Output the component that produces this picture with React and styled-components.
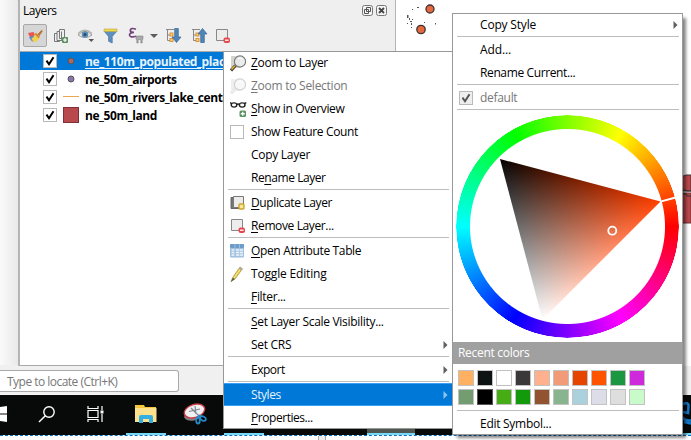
import React from "react";
import styled, { createGlobalStyle, css } from "styled-components";

const Global = createGlobalStyle`
  html, body { margin: 0; padding: 0; background: #fff; overflow: hidden; }
  *, *::before, *::after { box-sizing: border-box; }
  svg { display: block; flex: none; }
`;

const Screen = styled.div`
  position: relative;
  width: 691px;
  height: 440px;
  overflow: hidden;
  display: flex;
  flex-direction: column;
  background: #fff;
  color: #000;
  font: 12px/18px "Open Sans", "Noto Sans", sans-serif;
`;

const Workspace = styled.div`
  display: flex;
  height: 366px;
  flex: none;
`;

const Gutter = styled.div`
  width: 18px;
  background: linear-gradient(90deg, #fafafa, #e9e9e9);
  border-bottom: 1px solid #f0f0f0;
`;

const Panel = styled.div`
  width: 378px;
  display: flex;
  flex-direction: column;
  background: #efefef;
  border-left: 2px solid #b4b4b4;
  border-right: 1px solid #b4b4b4;
`;

const PanelHeader = styled.div`
  height: 21px;
  display: flex;
  align-items: center;
  justify-content: space-between;
  padding: 0 8px 0 3px;
`;

const PanelTitle = styled.span`
  letter-spacing: -0.45px;
`;

const HeaderButtons = styled.div`
  display: flex;
  gap: 3px;
`;

const Toolbar = styled.div`
  height: 30px;
  display: flex;
  align-items: center;
  padding: 0 0 1px 3px;
`;

const ToolSlot = styled.div`
  width: ${(p) => p.$w}px;
  height: 23px;
  display: flex;
  align-items: center;
  justify-content: center;
  flex: none;
  ${(p) =>
    p.$pressed &&
    css`
      background: #d6d6d6;
      border: 1px solid #a8a8a8;
      border-radius: 2px;
    `}
`;

const LayerList = styled.div`
  flex: 1;
  background: #fff;
  border-top: 1px solid #aaa;
  border-bottom: 1px solid #a8a8a8;
`;

const LayerRow = styled.div`
  height: 18px;
  display: flex;
  align-items: center;
  padding-left: 23px;
  font-weight: 700;
  white-space: nowrap;
  letter-spacing: ${(p) => p.$ls}px;
  ${(p) =>
    p.$selected &&
    css`
      background: #0078d7;
      color: #e8f3fc;
      text-decoration: underline;
      text-underline-offset: 2px;
    `}
`;

const Symbol = styled.div`
  width: 28px;
  display: flex;
  align-items: center;
  justify-content: center;
  flex: none;
`;

const LayerName = styled.span`
  padding-top: 2px;
  line-height: 16px;
`;

const MapCanvas = styled.div`
  flex: 1;
  display: flex;
  align-items: flex-start;
  justify-content: space-between;
`;

const StatusBar = styled.div`
  height: 29px;
  flex: none;
  display: flex;
  align-items: center;
  background: #f0f0f0;
  border-bottom: 1px solid #f6f6f6;
`;

const Locator = styled.div`
  width: 179px;
  height: 22px;
  margin-top: 1px;
  border: 1px solid #a9a9a9;
  border-left: 0;
  border-radius: 0 3px 3px 0;
  background: #fff;
  color: #777;
  line-height: 21px;
  padding-left: 7px;
  letter-spacing: -0.52px;
`;

const Taskbar = styled.div`
  height: 41px;
  flex: none;
  display: flex;
  background: #080a09;
  background-clip: padding-box;
  border-bottom: 1px dashed #0a6fc2;
`;

const TaskSlot = styled.div`
  width: ${(p) => p.$w}px;
  display: flex;
  align-items: center;
  justify-content: ${(p) => p.$align || "center"};
  border-bottom: 2px solid ${(p) => (p.$open ? "#76d9f5" : "transparent")};
  ${(p) => p.$lit && "background: #505652;"}
`;

const Footer = styled.div`
  flex: 1;
  padding-left: 318px;
`;

const SplitHandle = styled.div`
  width: 8px;
  height: 5px;
  background: #eee;
  border: solid #aaa;
  border-width: 0 1px;
`;

const Menu = styled.div`
  position: absolute;
  left: ${(p) => p.$x}px;
  top: ${(p) => p.$y}px;
  width: ${(p) => p.$w}px;
  height: ${(p) => p.$h}px;
  background: #fff;
  padding: 0 1px;
  &::after {
    content: "";
    position: absolute;
    inset: 0;
    border: 1px solid #989898;
    pointer-events: none;
  }
  ${(p) => p.$shadow && "box-shadow: 4px 4px 3px -1px rgba(0,0,0,.48);"}
`;

const Item = styled.div`
  height: 23px;
  display: flex;
  align-items: center;
  white-space: nowrap;
  padding-right: 4px;
  color: ${(p) => (p.$disabled ? "#777" : "#000")};
  ${(p) =>
    p.$active &&
    css`
      background: #0078d7;
      color: #e6f2fc;
      box-shadow: inset 0 1px #3aa0f5, inset 0 -1px #3aa0f5;
    `}
`;

const ItemIcon = styled.span`
  width: 27px;
  height: 23px;
  padding: 1px 0 0 6px;
  display: flex;
  align-items: center;
  flex: none;
`;

const Label = styled.span`
  flex: 1;
  line-height: 18px;
  padding-top: 1px;
  letter-spacing: ${(p) => p.$ls ?? -0.33}px;
`;

const Key = styled.span`
  text-decoration: underline;
  text-underline-offset: 2px;
  text-decoration-thickness: 1px;
`;

const Separator = styled.div`
  height: 2px;
  margin: 0 3px 0 4px;
  border-top: 1px solid #bdbdbd;
`;

const CheckBox = styled.span`
  width: 14px;
  height: 14px;
  display: flex;
  align-items: center;
  justify-content: center;
  flex: none;
  border: 1px solid #b9b9b9;
  background: ${(p) => (p.$grey ? "#eee" : "#fff")};
`;

const WheelArea = styled.div`
  position: relative;
  height: 231px;
  padding: 4px 0 0 3px;
`;

const HueRing = styled.div`
  width: 223px;
  height: 223px;
  border-radius: 50%;
  background: conic-gradient(from 90deg, #f00, #f0f, #00f, #0ff, #0f0, #ff0, #f00);
  mask: radial-gradient(circle, transparent 97px, #000 98px, #000 111px, transparent 111.6px);
`;

const WheelOverlay = styled.svg`
  position: absolute;
  left: 3px;
  top: 4px;
`;

const TriangleFill = styled.g`
  isolation: isolate;
`;

const WhiteLayer = styled.rect`
  mix-blend-mode: plus-lighter;
`;

const SectionHeader = styled.div`
  height: 22px;
  margin-bottom: 6px;
  padding-left: 5px;
  line-height: 22px;
  background: #a0a0a0;
  color: #fff;
  letter-spacing: -0.3px;
`;

const Swatches = styled.div`
  display: grid;
  grid-template-columns: repeat(10, 16px);
  grid-auto-rows: 16px;
  gap: 3px;
  padding-left: 5px;
  margin-bottom: 5px;
`;

const Swatch = styled.div`
  border: 1px solid ${(p) => (p.$current ? "#555" : "#c2c2c2")};
  background: ${(p) => p.$color};
`;

const Tick = ({ color = "#000" }) => (
  <svg width="12" height="12" viewBox="0 0 12 12">
    <path d="M2.5 5.6 5 9.2 9.5 2.2" fill="none" stroke={color} strokeWidth="2" />
  </svg>
);

const Arrow = ({ color = "#606060" }) => (
  <svg width="5" height="8" viewBox="0 0 5 8">
    <path d="M0.5 0 4.5 4 0.5 8Z" fill={color} />
  </svg>
);

const Magnifier = ({ faded }) => (
  <svg width="17" height="17" viewBox="0 0 17 17" opacity={faded ? 0.35 : 1}>
    <rect x="1" y="1" width="9" height="12" rx="1" fill="#d2d2cf" />
    <path d="M1 15.5 5.5 10.5" stroke={faded ? "#bbb" : "#333"} strokeWidth="3" />
    <path d="M1.5 14.5 5 10.7" stroke={faded ? "#ccc" : "#eab32d"} strokeWidth="1.6" />
    <circle cx="10" cy="6.5" r="5.6" fill="#e9ebea" fillOpacity=".9" stroke="#777" strokeWidth="1.1" />
    <path d="M8 3.5q2.5-1.5 4.5 1" stroke="#fff" fill="none" />
  </svg>
);

const Glasses = () => (
  <svg width="17" height="17" viewBox="0 0 17 17">
    <g fill="none" stroke="#222" strokeWidth="1.4">
      <ellipse cx="4" cy="4" rx="2.8" ry="2.1" />
      <ellipse cx="12.2" cy="4" rx="2.8" ry="2.1" />
      <path d="M6.7 3.5q1.4-1 2.800 0M0 1.700l1.800.9M14.500 2.500l1.800-.8" />
    </g>
    <rect x="9.500" y="9.500" width="6.500" height="6.500" rx="1.500" fill="#5b9160" />
    <path d="M12.750 10.700v4M10.800 12.750h4" stroke="#fff" strokeWidth="1.300" />
  </svg>
);

const Duplicate = () => (
  <svg width="16" height="16" viewBox="0 0 16 16">
    <path d="M1 2.5h10v11H1z" fill="#777" stroke="#666" />
    <path d="M3.5 1.5h10v11h-10z" fill="#ecedea" stroke="#777" />
    <rect x="9" y="9" width="5" height="5" rx="1" fill="#f8e69a" stroke="#c9a52c" strokeWidth="1.4" />
  </svg>
);

const Remove = () => (
  <svg width="16" height="16" viewBox="0 0 16 16">
    <path d="M1.5 1.5h11v11h-11z" fill="#ededeb" stroke="#888" />
    <rect x="8.5" y="9.5" width="6.5" height="5.5" rx="2" fill="#e5484d" />
    <path d="M10 12.2h3.6" stroke="#fff" strokeWidth="1.3" />
  </svg>
);

const Table = () => (
  <svg width="15" height="14" viewBox="0 0 15 14">
    <rect width="14" height="13.5" rx="1" fill="#9fc0de" />
    <rect width="14" height="4" rx="1" fill="#6d9cc9" />
    <path d="M1.5 6h3M1.5 8.5h3M1.5 11h3M6 6h7M6 8.5h7M6 11h7" stroke="#eef5fb" strokeWidth="1.4" />
    <path d="M5 0v13.5M9.5 0v13.5" stroke="#a9c7e2" strokeWidth=".8" />
  </svg>
);

const Pencil = () => (
  <svg width="16" height="17" viewBox="0 0 16 17">
    <path d="M1 15.5 3 11 10 1l2.500 1.800L5 13Z" fill="#e5c748" stroke="#a4913c" strokeWidth=".7" />
    <path d="M4 12 11 2.200" stroke="#fff08c" />
    <path d="M10 1l2.500 1.800-1.200 1.600L8.800 2.700Z" fill="#aaa" />
    <path d="M.8 16 2.800 11.700l2 1.400Z" fill="#555" />
  </svg>
);

const Brush = () => (
  <svg width="17" height="16" viewBox="0 0 17 16">
    <path d="M1 5 6.500 4 9 9 3.500 10.500Z" fill="#e8564f" />
    <path d="M2 9.500 6 7.500 9.500 12.500 5 13.500Z" fill="#5c8fcd" />
    <path d="M4.500 10.500Q7.500 9 7.800 6l4.500 4.200Q10.500 14 6.500 14Z" fill="#f5d04b" />
    <path d="M7.500 6 9 4.700 13 9l-1.600 1.200Z" fill="#d4873b" />
    <path d="M10.500 6.200 14.500 2l1.300 1-3.400 5Z" fill="#b9712c" />
  </svg>
);

const AddGroup = () => (
  <svg width="16" height="16" viewBox="0 0 16 16">
    <g fill="#eee" stroke="#777">
      <path d="M1.5 5.5h5v8h-5z" />
      <path d="M4 3.5h5v9H4z" />
      <path d="M6.5 1.5h5v9h-5z" />
    </g>
    <path d="M8.5 3.5v8" stroke="#777" />
    <rect x="9" y="9" width="6" height="6" rx="1" fill="#5b9160" />
    <path d="M12 10v4M10 12h4" stroke="#fff" strokeWidth="1.2" />
  </svg>
);

const Eye = () => (
  <svg width="18" height="15" viewBox="0 0 18 15">
    <path d="M1 7Q8 0 15 7 8 12 1 7Z" fill="#f2f2f0" stroke="#9a9a96" />
    <path d="M1 5.5Q8-1 15 5.5" fill="none" stroke="#b4b4ae" strokeWidth="1.3" />
    <circle cx="8" cy="6.5" r="3.3" fill="#5b8fba" />
    <circle cx="8" cy="6.5" r="1.5" fill="#2c4b66" />
    <path d="M11.5 11h5.5l-2.7 3Z" fill="#555" />
  </svg>
);

const Funnel = () => (
  <svg width="15" height="16" viewBox="0 0 15 16">
    <path d="M1 3h13L9.2 8.5V15l-3.6-1.7V8.5Z" fill="#5d8fc0" stroke="#41709c" strokeWidth=".7" />
    <path d="M1 1h13v2.6H1z" fill="#f0db4e" stroke="#b6a443" strokeWidth=".6" />
  </svg>
);

const Expression = () => (
  <svg width="16" height="17" viewBox="0 0 16 17">
    <path d="M8 2.2Q2.5.4 2.3 3.4 2.3 5.4 6 5.4 1.3 5.6 1.5 8.2 2 11 8 9.3" fill="none" stroke="#73477b" strokeWidth="1.7" />
    <path d="M8 9h7v3l-.8 1v3h-1.400v-3.500h-2.600V16H8.800v-3L8 12Z" fill="#ababab" stroke="#777" strokeWidth=".5" />
  </svg>
);

const Tree = ({ up }) => (
  <svg width="17" height="15" viewBox="0 0 17 15">
    <path d="M1 1.500h8M2.500 2v10.500H5M2.500 7H5" fill="none" stroke="#888" />
    <rect x="5" y="5" width="3" height="3" fill="#f7d27a" stroke="#e0923a" />
    <rect x="5" y="10.500" width="3" height="3" fill="#f7d27a" stroke="#e0923a" />
    <path
      d={up ? "M11.500 .5 16 6H13.300v8.500H9.700V6H7Z" : "M11.500 14.500 16 9H13.300V.5H9.700V9H7Z"}
      fill="#4f86ba"
      stroke="#38658f"
      strokeWidth=".7"
    />
  </svg>
);

const CaretDown = () => (
  <svg width="8" height="4" viewBox="0 0 8 4">
    <path d="M0 0h8L4 4Z" fill="#5c5c5c" />
  </svg>
);

const DockButton = ({ close }) => (
  <svg width="11" height="11" viewBox="0 0 11 11">
    <rect x=".5" y=".5" width="10" height="10" rx="2" fill="#f4f4f4" stroke="#777" />
    {close ? (
      <path d="m3 3 5 5M8 3 3 8" stroke="#444" strokeWidth="1.8" />
    ) : (
      <path d="M4.500 2.500h4v4h-4zM2.500 4.500h4v4h-4z" fill="#f4f4f4" stroke="#555" />
    )}
  </svg>
);

const Dot = ({ color }) => (
  <svg width="8" height="8" viewBox="0 0 8 8">
    <circle cx="4" cy="4" r="3" fill={color} stroke="#555" />
  </svg>
);

const LineSymbol = () => (
  <svg width="16" height="2" viewBox="0 0 16 2">
    <path d="M0 .5h16" stroke="#e9a84f" />
  </svg>
);

const FillSymbol = () => (
  <svg width="16" height="16" viewBox="0 0 16 16">
    <rect x=".5" y=".5" width="15" height="15" fill="#b8494d" stroke="#803136" />
  </svg>
);

const Islands = () => (
  <svg width="40" height="40" viewBox="0 0 40 40">
    <g fill="#e5693f" stroke="#3c3230" strokeWidth="1.300">
      <circle cx="34" cy="9" r="4" />
      <circle cx="25" cy="29.500" r="4.200" />
    </g>
    <g fill="#555">
      <path d="M11 15h1.500v3H11zM13 18h1v2h-1zM14 21h2v1h-2zM16 19h1v1h-1zM11 23h1v1h-1zM15 23h1v2h-1zM16 9h1v1h-1zM21 7h2v1h-2zM39 23h1.500v1.500H39zM15 27h1v1h-1zM28 22h1v1h-1z" />
    </g>
  </svg>
);

const Coast = () => (
  <svg width="10" height="226" viewBox="0 0 10 226">
    <path d="M0 177 5 175h5v16H0Z" fill="#bc484d" stroke="#463234" />
    <path d="M0 193h10v30H0Z" fill="#bc484d" stroke="#703338" />
    <path d="M0 190h4l2 1h4M0 194h5l1 2h4" fill="none" stroke="#333" />
  </svg>
);

const StartLogo = () => (
  <svg width="7" height="16" viewBox="0 0 7 16">
    <path d="M0 1 7 0v7.500H0zM0 8.500h7V16L0 15z" fill="#fff" />
  </svg>
);

const SearchGlass = () => (
  <svg width="18" height="17" viewBox="0 0 18 17">
    <circle cx="11" cy="6" r="5.200" fill="none" stroke="#fff" strokeWidth="1.400" />
    <path d="M7.300 9.700 1 16" stroke="#fff" strokeWidth="1.500" />
  </svg>
);

const TaskView = () => (
  <svg width="17" height="16" viewBox="0 0 17 16">
    <path d="M1 0v2.500h10V0M1 16v-2.500h10V16M1 4.500h10v7H1zM15 0v4M15 8v8" fill="none" stroke="#fff" strokeWidth="1.200" />
    <rect x="13.500" y="4.500" width="3" height="3" fill="#fff" />
  </svg>
);

const Folder = () => (
  <svg width="22" height="18" viewBox="0 0 22 18">
    <path d="M0 0h9l1 2h11v15H0z" fill="#f4c63d" />
    <path d="M0 3h21.500v14H0z" fill="#fde18c" />
    <path d="M4 18v-6q0-2 2-2h10q2 0 2 2v6h-4v-4H8v4Z" fill="#35aee2" />
  </svg>
);

const SnippingTool = () => (
  <svg width="24" height="22" viewBox="0 0 24 22">
    <ellipse cx="10" cy="12.500" rx="9" ry="5" fill="#817d80" transform="rotate(-12 10 12)" />
    <ellipse cx="11.500" cy="8" rx="10.500" ry="6.500" fill="#f1f0f2" stroke="#c93e44" strokeWidth="1.300" transform="rotate(-18 11.500 8)" />
    <path d="M6 8.500 17 6M12 3l1 8M8 5l8 8" stroke="#858a90" strokeWidth="1.200" />
    <g fill="none" stroke="#2688c9" strokeWidth="1.800">
      <ellipse cx="15" cy="17.500" rx="1.800" ry="3" />
      <ellipse cx="20" cy="15.500" rx="3" ry="2" transform="rotate(30 20 15.500)" />
      <path d="m15 14 2-2" />
    </g>
  </svg>
);

const CodeLogo = () => (
  <svg width="9" height="28" viewBox="0 0 9 28">
    <path d="M1 4q5-2 5.500 1L6 13 1 12M0 17q3 4 9 3.500M2 22l7 1.500" fill="none" stroke="#1479cb" strokeWidth="2.600" />
  </svg>
);

const layers = [
  { name: "ne_110m_populated_places", symbol: <Dot color="#a6686b" />, selected: true, ls: -0.38 },
  { name: "ne_50m_airports", symbol: <Dot color="#8c72ae" />, ls: -0.46 },
  { name: "ne_50m_rivers_lake_centerlines", symbol: <LineSymbol />, ls: -0.39 },
  { name: "ne_50m_land", symbol: <FillSymbol />, ls: -0.44 },
];

const menuItems = [
  { text: "_Zoom to Layer", icon: <Magnifier />, ls: -0.29 },
  { text: "_Zoom to Selection", icon: <Magnifier faded />, disabled: true, ls: -0.26 },
  { text: "_Show in Overview", icon: <Glasses />, ls: -0.36 },
  { text: "Show Feature Count", icon: <CheckBox />, ls: -0.35 },
  { text: "Copy Layer", ls: -0.28 },
  { text: "Re_name Layer", ls: -0.43 },
  null,
  { text: "_Duplicate Layer", icon: <Duplicate />, ls: -0.37 },
  { text: "_Remove Layer...", icon: <Remove />, ls: -0.38 },
  null,
  { text: "_Open Attribute Table", icon: <Table />, ls: -0.35 },
  { text: "Toggle Editing", icon: <Pencil />, ls: -0.17 },
  { text: "_Filter..." },
  null,
  { text: "_Set Layer Scale Visibility...", ls: -0.3 },
  { text: "Set CRS", submenu: true, ls: -0.3 },
  null,
  { text: "Export", submenu: true, ls: -0.5 },
  null,
  { text: "Styles", submenu: true, active: true, ls: -0.42 },
  { text: "_Properties...", ls: -0.45 },
];

const styleItems = [
  { text: "Copy Style", submenu: true, ls: -0.18 },
  null,
  { text: "Add...", ls: -0.12 },
  { text: "Rename Current...", ls: -0.38 },
  null,
  { text: "default", disabled: true, ls: -0.3, icon: <CheckBox $grey><Tick color="#555" /></CheckBox> },
  null,
];

const recent = [
  "#ffb061", "#0d1312", "#ffffff", "#3a3839", "#ffb08c", "#f19b78", "#e64500", "#ff5500", "#1b9641", "#cf29dc",
  "#739c70", "#000000", "#46ad14", "#129a0c", "#925330", "#89b58e", "#abd1df", "#dcdde8", "#dedede", "#c9fac9",
];

function MenuText({ text, ls }) {
  const at = text.indexOf("_");
  if (at < 0) return <Label $ls={ls}>{text}</Label>;
  return (
    <Label $ls={ls}>
      {text.slice(0, at)}
      <Key>{text[at + 1]}</Key>
      {text.slice(at + 2)}
    </Label>
  );
}

function MenuItems({ items }) {
  return items.map((item, i) =>
    item ? (
      <Item key={i} $disabled={item.disabled} $active={item.active}>
        <ItemIcon>{item.icon}</ItemIcon>
        <MenuText text={item.text} ls={item.ls} />
        {item.submenu && <Arrow color={item.active ? "#8cc4f2" : undefined} />}
      </Item>
    ) : (
      <Separator key={i} />
    )
  );
}

function ColorWheel() {
  return (
    <WheelArea>
      <HueRing />
      <WheelOverlay width="223" height="223" viewBox="0 0 223 223">
        <defs>
          <linearGradient id="hue" gradientUnits="userSpaceOnUse" x1="65.200" y1="124" x2="204.500" y2="86.500">
            <stop stopColor="#000" />
            <stop offset="1" stopColor="#ff4000" />
          </linearGradient>
          <linearGradient id="white" gradientUnits="userSpaceOnUse" x1="124.300" y1="65" x2="86.500" y2="204.500">
            <stop stopColor="#000" />
            <stop offset="1" stopColor="#fff" />
          </linearGradient>
          <clipPath id="tri">
            <path d="M204.500 86.500 44 44 86.500 204.500Z" />
          </clipPath>
        </defs>
        <TriangleFill clipPath="url(#tri)">
          <rect width="223" height="223" fill="url(#hue)" />
          <WhiteLayer width="223" height="223" fill="url(#white)" />
        </TriangleFill>
        <path d="M204.500 86.600 219.500 82.500" stroke="#fff" strokeWidth="2" />
        <circle cx="156.300" cy="115.700" r="4" fill="none" stroke="#fff" strokeWidth="1.800" />
      </WheelOverlay>
    </WheelArea>
  );
}

export default function App() {
  return (
    <>
      <Global />
      <Screen>
        <Workspace>
          <Gutter />
          <Panel>
            <PanelHeader>
              <PanelTitle>Layers</PanelTitle>
              <HeaderButtons>
                <DockButton />
                <DockButton close />
              </HeaderButtons>
            </PanelHeader>
            <Toolbar>
              <ToolSlot $w={24} $pressed><Brush /></ToolSlot>
              <ToolSlot $w={27}><AddGroup /></ToolSlot>
              <ToolSlot $w={24}><Eye /></ToolSlot>
              <ToolSlot $w={24}><Funnel /></ToolSlot>
              <ToolSlot $w={28}><Expression /></ToolSlot>
              <ToolSlot $w={8}><CaretDown /></ToolSlot>
              <ToolSlot $w={30}><Tree /></ToolSlot>
              <ToolSlot $w={22}><Tree up /></ToolSlot>
              <ToolSlot $w={25}><Remove /></ToolSlot>
            </Toolbar>
            <LayerList>
              {layers.map((l) => (
                <LayerRow key={l.name} $selected={l.selected} $ls={l.ls}>
                  <CheckBox><Tick /></CheckBox>
                  <Symbol>{l.symbol}</Symbol>
                  <LayerName>{l.name}</LayerName>
                </LayerRow>
              ))}
            </LayerList>
          </Panel>
          <MapCanvas>
            <Islands />
            <Coast />
          </MapCanvas>
        </Workspace>
        <StatusBar>
          <Locator>Type to locate (Ctrl+K)</Locator>
        </StatusBar>
        <Taskbar>
          <TaskSlot $w={22} $align="flex-start"><StartLogo /></TaskSlot>
          <TaskSlot $w={50}><SearchGlass /></TaskSlot>
          <TaskSlot $w={46}><TaskView /></TaskSlot>
          <TaskSlot $w={8} />
          <TaskSlot $w={40} $open><Folder /></TaskSlot>
          <TaskSlot $w={58}><SnippingTool /></TaskSlot>
          <TaskSlot $w={40} $open />
          <TaskSlot $w={103} />
          <TaskSlot $w={48} $open $lit />
          <TaskSlot $w={267} />
          <TaskSlot $w={9} $open $align="flex-end"><CodeLogo /></TaskSlot>
        </Taskbar>
        <Footer><SplitHandle /></Footer>

        <Menu $x={223} $y={51} $w={230} $h={378}>
          <MenuItems items={menuItems} />
        </Menu>
        <Menu $x={452} $y={13} $w={231} $h={422} $shadow>
          <MenuItems items={styleItems} />
          <ColorWheel />
          <SectionHeader>Recent colors</SectionHeader>
          <Swatches>
            {recent.map((c, i) => (
              <Swatch key={i} $color={c} $current={c === "#000000"} />
            ))}
          </Swatches>
          <Separator />
          <MenuItems items={[{ text: "Edit Symbol...", ls: -0.28 }]} />
        </Menu>
      </Screen>
    </>
  );
}
